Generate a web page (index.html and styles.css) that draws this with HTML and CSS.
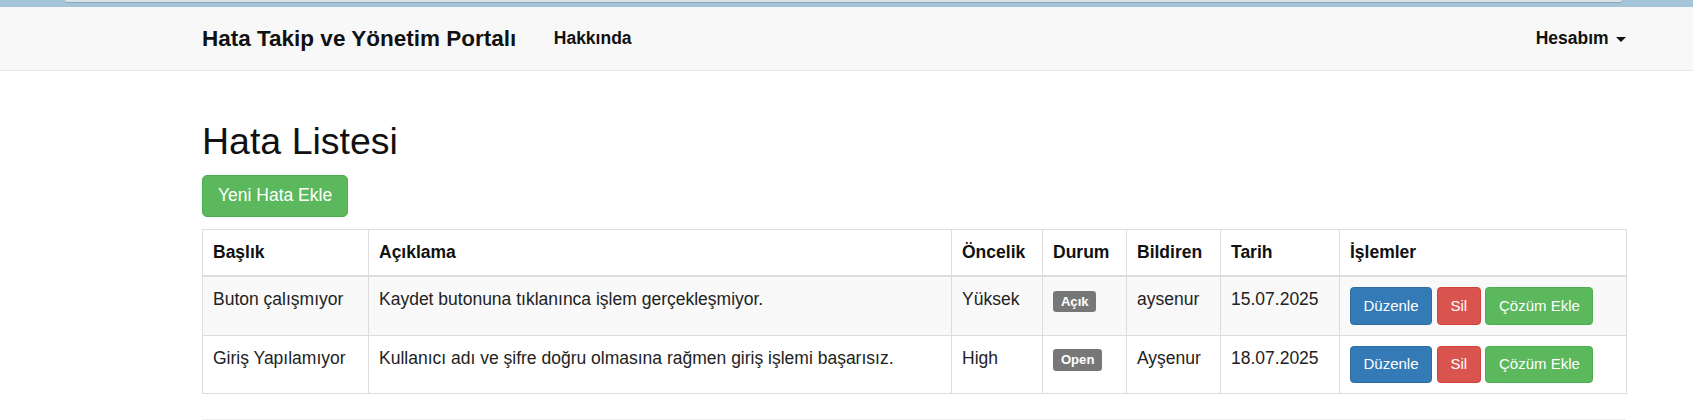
FILE: index.html
```html
<!DOCTYPE html>
<html lang="tr">
<head>
<meta charset="utf-8">
<title>Hata Listesi</title>
<link rel="stylesheet" href="styles.css">
</head>
<body>
<div class="chrome"><div class="chrome-tab"></div></div>
<nav class="navbar">
  <div class="container nav-inner">
    <a class="brand" href="#">Hata Takip ve Yönetim Portalı</a>
    <a class="nav-link" href="#">Hakkında</a>
    <a class="nav-link nav-right" href="#">Hesabım <span class="caret"></span></a>
  </div>
</nav>
<main class="container main">
  <h2 class="title">Hata Listesi</h2>
  <p class="actions"><a class="btn btn-success" href="#">Yeni Hata Ekle</a></p>
  <table class="table">
    <colgroup>
      <col class="c1"><col class="c2"><col class="c3"><col class="c4"><col class="c5"><col class="c6"><col class="c7">
    </colgroup>
    <thead>
      <tr><th>Başlık</th><th>Açıklama</th><th>Öncelik</th><th>Durum</th><th>Bildiren</th><th>Tarih</th><th>İşlemler</th></tr>
    </thead>
    <tbody>
      <tr>
        <td>Buton çalışmıyor</td>
        <td>Kaydet butonuna tıklanınca işlem gerçekleşmiyor.</td>
        <td>Yüksek</td>
        <td><span class="label">Açık</span></td>
        <td>aysenur</td>
        <td>15.07.2025</td>
        <td><a class="btn btn-sm btn-primary" href="#">Düzenle</a> <a class="btn btn-sm btn-danger" href="#">Sil</a> <a class="btn btn-sm btn-success" href="#">Çözüm Ekle</a></td>
      </tr>
      <tr>
        <td>Giriş Yapılamıyor</td>
        <td>Kullanıcı adı ve şifre doğru olmasına rağmen giriş işlemi başarısız.</td>
        <td>High</td>
        <td><span class="label">Open</span></td>
        <td>Ayşenur</td>
        <td>18.07.2025</td>
        <td><a class="btn btn-sm btn-primary" href="#">Düzenle</a> <a class="btn btn-sm btn-danger" href="#">Sil</a> <a class="btn btn-sm btn-success" href="#">Çözüm Ekle</a></td>
      </tr>
    </tbody>
  </table>
  <hr class="rule">
</main>
</body>
</html>
```
FILE: styles.css
```css
* { box-sizing: border-box; }
html, body { margin: 0; padding: 0; }
body {
  font-family: "Liberation Sans", Arial, sans-serif;
  font-size: 17.5px;
  line-height: 25px;
  color: #333;
  background: #fff;
}
a { text-decoration: none; }

.chrome {
  height: 7px;
  background: #a3c4d9;
  overflow: hidden;
}
.chrome-tab {
  margin-left: 65px;
  width: 1557px;
  height: 3px;
  background: #d9e2e8;
  border-bottom: 1px solid #8ea6b6;
  border-radius: 0 0 8px 8px;
}

.container {
  width: 1424px;
  margin-left: 202px;
}
.main { display: flow-root; }

.navbar {
  background: #f8f8f8;
  border-bottom: 1px solid #e7e7e7;
  height: 64px;
  margin-bottom: 25px;
}
.nav-inner {
  display: flex;
  align-items: center;
  height: 63px;
}
.brand {
  font-size: 22.5px;
  font-weight: bold;
  color: #111;
  line-height: 25px;
  padding-right: 18.75px;
}
.nav-link {
  font-weight: bold;
  color: #111;
  padding: 0 18.75px;
}
.nav-right {
  margin-left: auto;
  padding-right: 0;
}
.caret {
  display: inline-block;
  width: 0;
  height: 0;
  margin-left: 2.5px;
  vertical-align: middle;
  border-top: 5px solid #111;
  border-left: 5px solid transparent;
  border-right: 5px solid transparent;
}

.title {
  font-size: 37.5px;
  font-weight: normal;
  line-height: 1.1;
  margin: 25px 0 12.5px;
  color: #111;
}
.actions { margin: 0 0 12.5px; }

.btn {
  display: inline-block;
  padding: 7.5px 15px;
  font-size: 17.5px;
  line-height: 25px;
  border: 1px solid transparent;
  border-radius: 5px;
  color: #fff;
  vertical-align: middle;
}
.btn-sm {
  padding: 6.5px 12.5px;
  font-size: 15px;
  line-height: 22.5px;
  border-radius: 3.75px;
}
.btn-success { background: #5cb85c; border-color: #4cae4c; }
.btn-primary { background: #337ab7; border-color: #2e6da4; }
.btn-danger { background: #d9534f; border-color: #d43f3a; }

.table {
  width: 1424px;
  table-layout: fixed;
  border-collapse: collapse;
  border: 1px solid #ddd;
  margin-bottom: 25px;
}
.c1 { width: 166px; }
.c2 { width: 583px; }
.c3 { width: 91px; }
.c4 { width: 84px; }
.c5 { width: 94px; }
.c6 { width: 119px; }
.c7 { width: 287px; }
.table th, .table td {
  border: 1px solid #ddd;
  padding: 10px;
  text-align: left;
  vertical-align: top;
  line-height: 25px;
}
.table th {
  vertical-align: bottom;
  border-bottom: 2.5px solid #ddd;
  font-weight: bold;
  color: #111;
}
.table td { color: #222; }
.table tbody tr:nth-child(odd) { background: #f9f9f9; }

.label {
  display: inline;
  padding: 2.6px 7.9px 3.9px;
  font-size: 13.125px;
  font-weight: bold;
  line-height: 1;
  color: #fff;
  background: #777;
  border-radius: 3.3px;
  vertical-align: baseline;
}

.rule {
  margin: 25px 0;
  border: 0;
  border-top: 1px solid #eee;
}
```
